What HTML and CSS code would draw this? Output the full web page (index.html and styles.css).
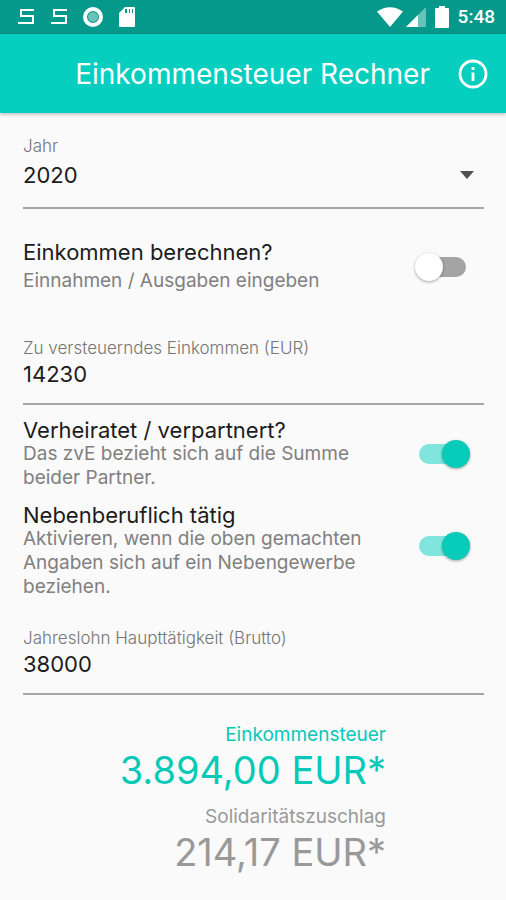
FILE: index.html
```html
<!DOCTYPE html>
<html lang="de">
<head>
<meta charset="utf-8">
<meta name="viewport" content="width=device-width, initial-scale=1">
<title>Einkommensteuer Rechner</title>
<link rel="stylesheet" href="styles.css">
</head>
<body>
<div class="status">
  <div class="status-group notifications">
    <svg width="18" height="18" viewBox="0 0 18 18" fill="none" stroke="currentColor" stroke-width="2"><path d="M16 2H3v6h12v7H0"/></svg>
    <svg width="18" height="18" viewBox="0 0 18 18" fill="none" stroke="currentColor" stroke-width="2"><path d="M17 2H4v6h12v7H1"/></svg>
    <svg width="22" height="22" viewBox="0 0 22 22"><circle cx="11" cy="11" r="8" fill="none" stroke="currentColor" stroke-width="4"/><circle cx="11" cy="11" r="5" fill="currentColor" opacity=".4"/></svg>
    <svg width="18" height="22" viewBox="0 0 18 22"><path fill="currentColor" fill-rule="evenodd" d="M7 1h9q1 0 1 1v18q0 1-1 1H2q-1 0-1-1V7zM7 3v4h2V3zM11 3v4h1V3zM14 3v4h1V3z"/></svg>
  </div>
  <div class="status-group system">
    <svg width="26" height="20" viewBox="0 0 26 20"><path fill="currentColor" d="M0 4.500Q13-4 26 4.500L13 20z"/></svg>
    <svg width="20" height="20" viewBox="0 0 20 20" fill="currentColor"><path opacity=".4" d="M20 0v20H0z"/><path d="M12 8v12H0z"/></svg>
    <svg class="battery" width="14" height="22" viewBox="0 0 14 22"><path fill="currentColor" d="M4 0h6v2h3q1 0 1 1v18q0 1-1 1H1q-1 0-1-1V3q0-1 1-1h3z"/></svg>
    <time>5:48</time>
  </div>
</div>
<header class="appbar">
  <h1>Einkommensteuer Rechner</h1>
  <button type="button" aria-label="Info">
    <svg width="30" height="30" viewBox="0 0 30 30" fill="none" stroke="currentColor" stroke-width="2.800"><circle cx="15" cy="15" r="13"/><path d="M15 13.500V22M15 8v3"/></svg>
  </button>
</header>
<main>
  <form>
    <div class="field year">
      <label for="year">Jahr</label>
      <div class="select">
        <select id="year"><option>2020</option></select>
        <svg width="14" height="8" viewBox="0 0 14 8"><path fill="currentColor" d="M0 0h14L7 8z"/></svg>
      </div>
    </div>
    <div class="row spaced">
      <label for="calc"><span class="title">Einkommen berechnen?</span><span class="hint">Einnahmen / Ausgaben eingeben</span></label>
      <input class="switch" type="checkbox" role="switch" id="calc">
    </div>
    <div class="field">
      <label for="income">Zu versteuerndes Einkommen (EUR)</label>
      <input type="text" inputmode="numeric" id="income" value="14230">
    </div>
    <div class="row">
      <label for="married"><span class="title">Verheiratet / verpartnert?</span><span class="hint">Das zvE bezieht sich auf die Summe beider Partner.</span></label>
      <input class="switch" type="checkbox" role="switch" id="married" checked>
    </div>
    <div class="row long">
      <label for="side"><span class="title">Nebenberuflich tätig</span><span class="hint">Aktivieren, wenn die oben gemachten Angaben sich auf ein Nebengewerbe beziehen.</span></label>
      <input class="switch" type="checkbox" role="switch" id="side" checked>
    </div>
    <div class="field">
      <label for="wage">Jahreslohn Haupttätigkeit (Brutto)</label>
      <input type="text" inputmode="numeric" id="wage" value="38000">
    </div>
  </form>
  <dl class="results">
    <div class="tax"><dt>Einkommensteuer</dt><dd>3.894,00 EUR*</dd></div>
    <div class="soli"><dt>Solidaritätszuschlag</dt><dd>214,17 EUR*</dd></div>
  </dl>
</main>
</body>
</html>
```
FILE: styles.css
```css
* { box-sizing: border-box; }
body {
  margin: 0;
  background: #fafafa;
  color: #1c1c1c;
  font-family: Inter, Roboto, sans-serif;
}
svg { display: block; flex: none; }
.status {
  display: flex;
  justify-content: space-between;
  align-items: center;
  height: 34px;
  padding: 0 11px 0 18px;
  background: #05998b;
  color: #fff;
}
.status-group { display: flex; align-items: center; }
.notifications { gap: 14px; }
.system { gap: 3px; }
.battery { margin: 0 6px; }
.status time { font: 500 19px/24px Roboto, sans-serif; }
.appbar {
  display: flex;
  justify-content: flex-end;
  align-items: center;
  gap: 28px;
  height: 79px;
  padding: 0 18px;
  background: #06cfbf;
  color: #fff;
  box-shadow: 0 1px 4px rgba(0, 0, 0, .3);
}
h1 { margin: 0; font-size: 28px; line-height: 36px; font-weight: 400; }
.appbar button {
  padding: 0;
  border: 0;
  background: none;
  color: inherit;
}
main { padding: 21px 22px 24px 23px; }
.field {
  display: flex;
  flex-direction: column;
  padding-bottom: 15px;
  border-bottom: 2px solid #a6a6a6;
}
.field label { font-size: 17px; line-height: 24px; font-weight: 300; color: #757575; }
.field input, .field select {
  width: 100%;
  height: 28px;
  padding: 0;
  border: 0;
  outline: 0;
  appearance: none;
  background: none;
  color: inherit;
  font: 400 22px/28px Inter, Roboto, sans-serif;
}
.year { padding-bottom: 18px; }
.select {
  display: flex;
  align-items: center;
  padding: 3px 10px 0 0;
}
.select svg { color: #505050; }
.row {
  display: flex;
  justify-content: space-between;
  align-items: center;
  gap: 32px;
  margin-top: 13px;
  padding-right: 14px;
}
.row label { flex: 1; max-width: 360px; }
.title, .hint { display: block; line-height: 24px; }
.title { font-size: 22px; }
.hint { font-size: 19px; color: #808080; }
.spaced { margin: 31px 0 43px; }
.spaced .hint { margin-top: 5px; }
.long { margin-bottom: 27px; }
.long .switch { margin-bottom: 10px; }
.switch {
  position: relative;
  flex: none;
  display: flex;
  align-items: center;
  width: 55px;
  height: 28px;
  margin: 0;
  appearance: none;
}
.switch::before {
  content: "";
  width: 47px;
  height: 20px;
  margin: 0 4px;
  border-radius: 10px;
  background: #a4a4a4;
}
.switch::after {
  content: "";
  position: absolute;
  left: 0;
  width: 28px;
  height: 28px;
  border-radius: 50%;
  background: #fff;
  box-shadow: 0 1px 3px rgba(0, 0, 0, .35);
}
.switch:checked::before { background: #80e5dc; }
.switch:checked::after { left: auto; right: 0; background: #06cbb9; }
.results { margin: 28px 98px 0 0; text-align: right; }
.results dt { font-size: 19px; line-height: 24px; }
.results dd { margin: 0; font-size: 38px; line-height: 46px; }
.tax { color: #06c9b8; }
.soli { margin-top: 12px; color: #999; }
```
